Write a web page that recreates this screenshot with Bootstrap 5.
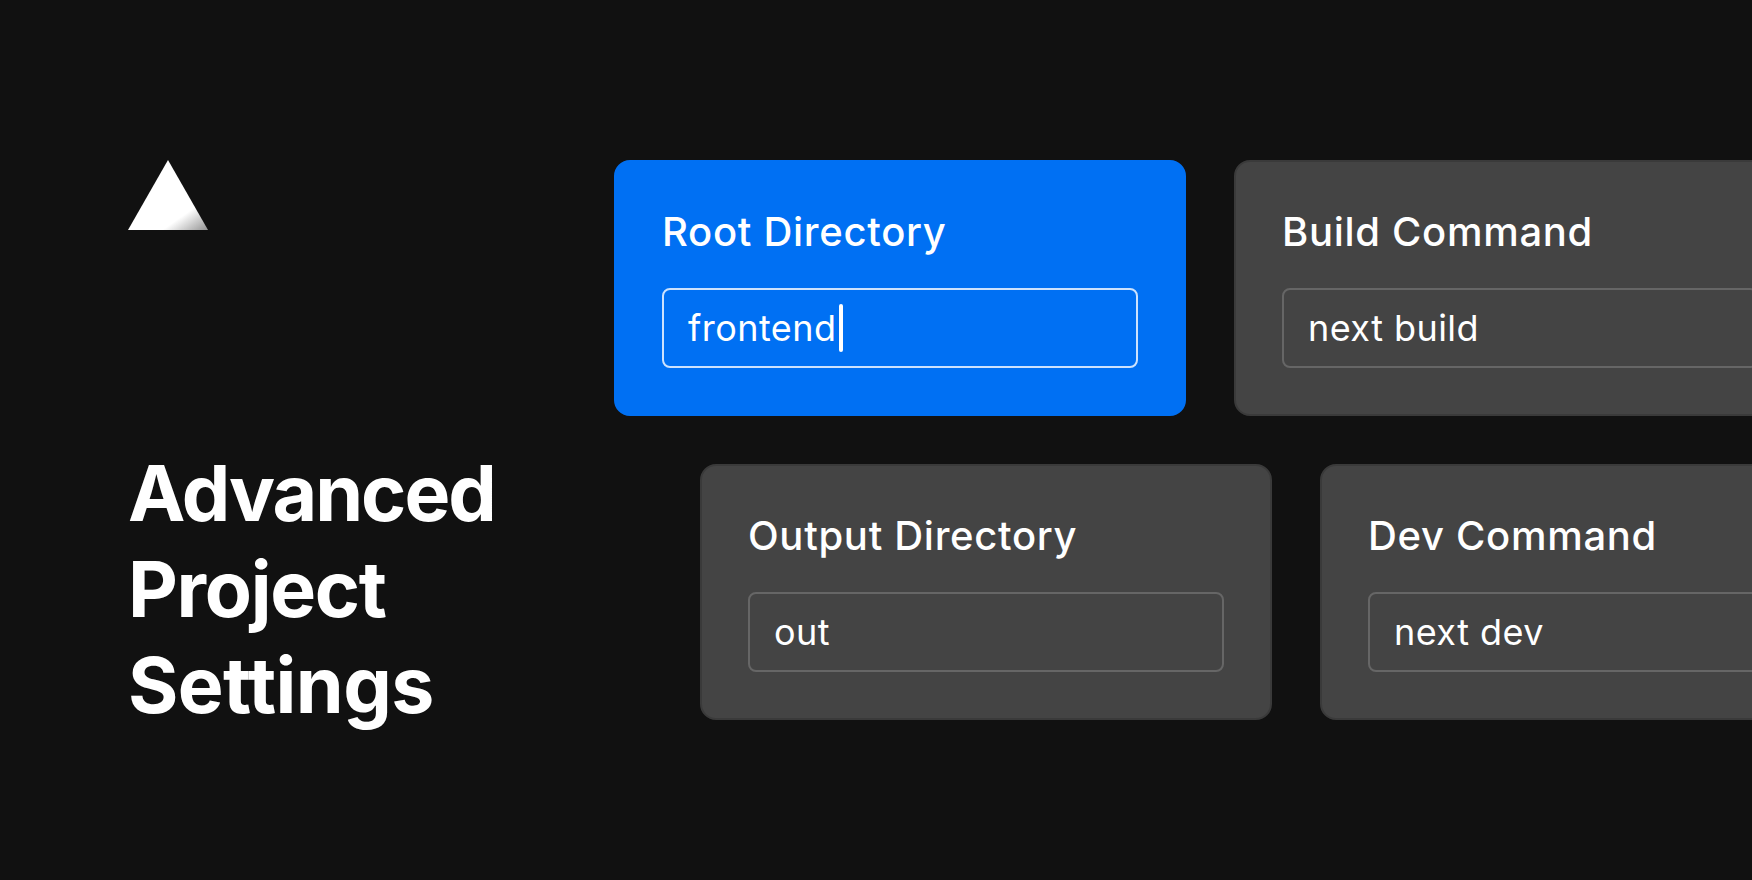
<!DOCTYPE html>
<html lang="en">
<head>
<meta charset="utf-8">
<title>Advanced Project Settings</title>
<link href="https://cdn.jsdelivr.net/npm/bootstrap@5.3.0/dist/css/bootstrap.min.css" rel="stylesheet">
<style>
html, body { height: 100%; }
body { background: #111; color: #fff; font-family: Inter, sans-serif; overflow: hidden; }
.stage { width: 1752px; height: 880px; padding: 160px 0 0 128px; overflow: hidden; }
.side { width: 486px; flex: none; }
.logo { display: block; width: 80px; height: 70px; }
.headline { font-size: 77px; font-weight: 700; line-height: 96px; margin: 0; padding-top: 215px; letter-spacing: -2px; font-variant-ligatures: none; font-feature-settings: "calt" 0, "liga" 0; }
.line-a { letter-spacing: -2px; }
.line-b { letter-spacing: -1.3px; }
.line-c { letter-spacing: -.6px; }
.deck { flex: none; }
.offset-row { padding-left: 86px; }
.tile { width: 572px; height: 256px; flex: none; padding: 46px; background: #444; border: 2px solid #3a3a3a; border-radius: 16px; }
.tile-on { background: #0070f3; border-color: #0070f3; }
.tile-title { font-size: 40px; font-weight: 500; line-height: 46px; letter-spacing: .7px; padding-top: 1px; margin: 0 0 33px; }
.field { height: 80px; padding: 0 24px; border: 2px solid #666; border-radius: 8px; font-size: 36px; line-height: 1; letter-spacing: .45px; }
.tile-on .field { border-color: rgba(255,255,255,.8); }
.caret { display: block; width: 4px; height: 48px; background: #fff; border-radius: 2px; margin-left: 3px; }
</style>
</head>
<body>
<main class="stage d-flex">
  <section class="side">
    <svg class="logo" viewBox="0 0 80 70" aria-label="Vercel">
      <defs><linearGradient id="tri" gradientUnits="userSpaceOnUse" x1="60" y1="52" x2="74" y2="72"><stop offset="0" stop-color="#fff"/><stop offset="1" stop-color="#999"/></linearGradient></defs>
      <polygon points="40,0 80,70 0,70" fill="url(#tri)"/>
    </svg>
    <h1 class="headline"><span class="line-a">Advanced</span><br><span class="line-b">Project</span><br><span class="line-c">Settings</span></h1>
  </section>
  <section class="deck d-flex flex-column gap-5">
    <div class="d-flex gap-5">
      <div class="tile tile-on">
        <p class="tile-title">Root Directory</p>
        <div class="field d-flex align-items-center">frontend<span class="caret"></span></div>
      </div>
      <div class="tile">
        <p class="tile-title">Build Command</p>
        <div class="field d-flex align-items-center">next build</div>
      </div>
    </div>
    <div class="offset-row d-flex gap-5">
      <div class="tile">
        <p class="tile-title">Output Directory</p>
        <div class="field d-flex align-items-center">out</div>
      </div>
      <div class="tile">
        <p class="tile-title">Dev Command</p>
        <div class="field d-flex align-items-center">next dev</div>
      </div>
    </div>
  </section>
</main>
<script src="https://cdn.jsdelivr.net/npm/bootstrap@5.3.0/dist/js/bootstrap.bundle.min.js"></script>
</body>
</html>
